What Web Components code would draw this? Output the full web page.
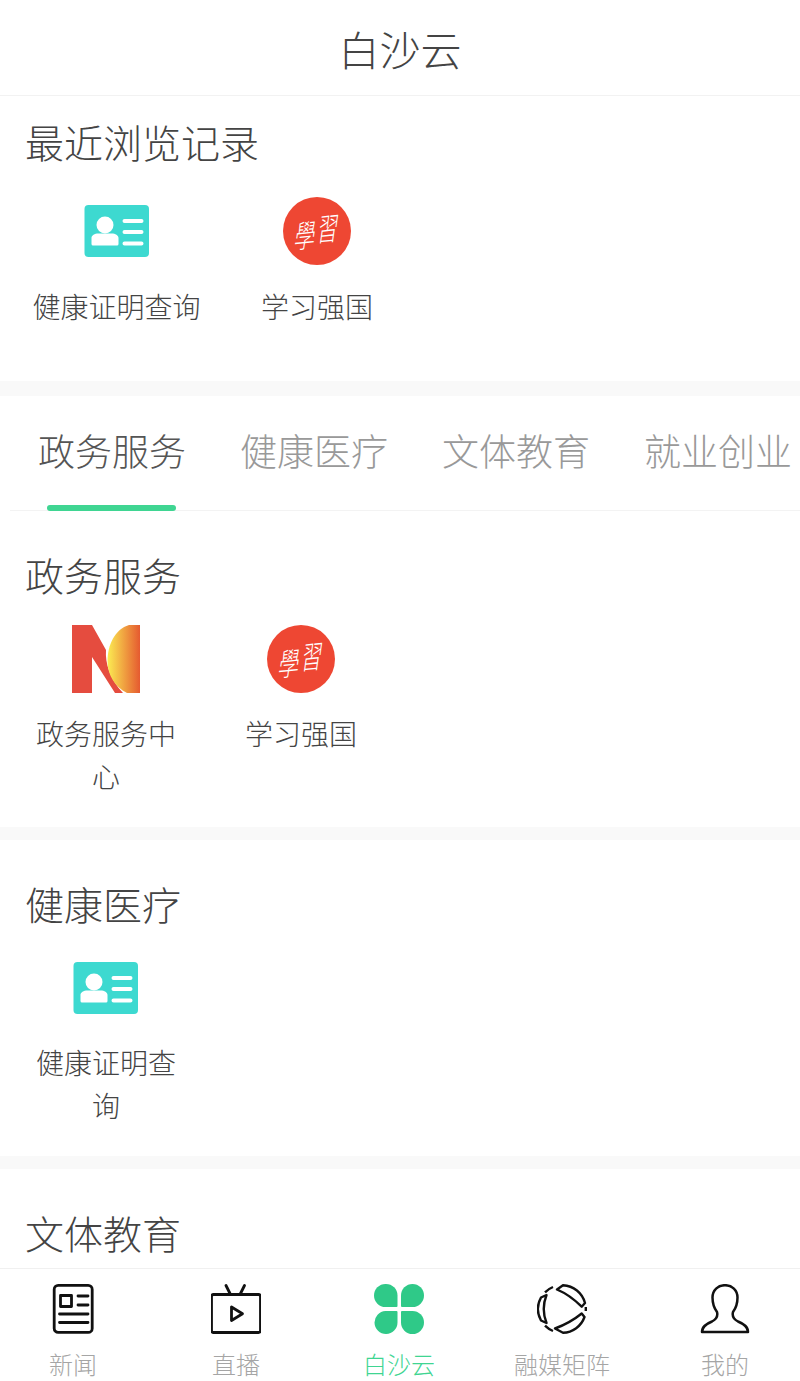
<!DOCTYPE html>
<html lang="zh-CN">
<head>
<meta charset="utf-8">
<title>白沙云</title>
<style>
  html, body { margin: 0; height: 1381px; overflow: hidden; }
  body {
    display: flex; flex-direction: column;
    background: #f9f9f9; color: #444;
    font-family: "Noto Sans CJK SC", "Noto Sans", sans-serif; font-weight: 300;
  }
  main { flex: 1; min-height: 0; overflow: hidden; }
</style>
</head>
<body>
<bs-header>白沙云</bs-header>
<main>
  <bs-section heading="最近浏览记录" recent>
    <bs-service label="健康证明查询" auto><icon-card></icon-card></bs-service>
    <bs-service label="学习强国" auto><icon-xuexi></icon-xuexi></bs-service>
  </bs-section>
  <bs-tabs>
    <bs-tab active>政务服务</bs-tab>
    <bs-tab>健康医疗</bs-tab>
    <bs-tab>文体教育</bs-tab>
    <bs-tab>就业创业</bs-tab>
  </bs-tabs>
  <bs-section heading="政务服务">
    <bs-service label="政务服务中心"><icon-n></icon-n></bs-service>
    <bs-service label="学习强国"><icon-xuexi></icon-xuexi></bs-service>
  </bs-section>
  <bs-section heading="健康医疗">
    <bs-service label="健康证明查询"><icon-card></icon-card></bs-service>
  </bs-section>
  <bs-section heading="文体教育"></bs-section>
</main>
<bs-nav>
  <bs-nav-item label="新闻">
    <svg viewBox="0 0 50 50" fill="none" stroke="#111" stroke-width="2.800" stroke-linecap="round" stroke-linejoin="round">
      <rect x="6.2" y="1.4" width="38" height="47" rx="4"/>
      <rect x="12.5" y="11.5" width="11" height="11" stroke-linecap="butt"/>
      <path d="M30 12h10M30 21h10M11.5 30h28.5M11.5 38.500h28.500"/>
    </svg>
  </bs-nav-item>
  <bs-nav-item label="直播">
    <svg viewBox="0 0 50 50" fill="none" stroke="#111" stroke-width="2.800" stroke-linecap="round" stroke-linejoin="round">
      <rect x="0.5" y="10.500" width="49" height="38" rx="2"/>
      <path d="M15 1.500l4.500 9M33.500 1.500l-4.500 9"/>
      <path d="M20.500 23v13.500l11-6.700z"/>
    </svg>
  </bs-nav-item>
  <bs-nav-item label="白沙云" active>
    <svg viewBox="0 0 50 50" fill="#2fc988">
      <path d="M12 0h0a11.500 11.500 0 0 1 11.500 11.500V22a1 1 0 0 1-1 1H11.500a11.500 11.500 0 0 1 0-23z"/>
      <path d="M38.500 0a11.500 11.500 0 0 1 0 23H28a1 1 0 0 1-1-1V11.500A11.500 11.500 0 0 1 38.500 0z"/>
      <path d="M11.500 27H22.500a1 1 0 0 1 1 1v10.500a11.500 11.500 0 1 1-12-11.500z"/>
      <path d="M28 27h10.500a11.500 11.500 0 1 1-11.500 11.500V28a1 1 0 0 1 1-1z"/>
    </svg>
  </bs-nav-item>
  <bs-nav-item label="融媒矩阵">
    <svg viewBox="0 0 50 50" fill="none" stroke="#111" stroke-width="2.400" stroke-linejoin="round">
      <path d="M20 5.500L26 1.200A23.800 23.800 0 0 1 48 19L44.700 22.700Q33 11 20 5.500Z"/>
      <path d="M18 44.500Q33 39 44.700 29.500L47.500 33A23.800 23.800 0 0 1 26 48.800Z"/>
      <path d="M9.500 11L4 13.500A23.800 23.800 0 0 0 4 36.500L9.500 39Q4 25 9.500 11Z"/>
      <path d="M8 8.300A23.800 23.800 0 0 1 16 3M8 41.700A23.800 23.800 0 0 0 16 47M48.800 23V27"/>
    </svg>
  </bs-nav-item>
  <bs-nav-item label="我的">
    <svg viewBox="0 0 50 50" fill="none" stroke="#111" stroke-width="2.500" stroke-linejoin="round">
      <path d="M2 48H48C48 42.500 44 40 38 37.500C34 35.500 32 32 33 28C36 24 37.500 18 37.500 13.500C37.500 6 32 1.200 25 1.200C18 1.200 12.500 6 12.500 13.500C12.500 18 14 24 17 28C18 32 16 35.500 12 37.500C6 40 2 42.500 2 48Z"/>
    </svg>
  </bs-nav-item>
</bs-nav>

<script>
  // small helper, every element gets its own open shadow root from a string
  class ShadowEl extends HTMLElement {
    constructor() {
      super();
      this.attachShadow({ mode: 'open' });
    }
    connectedCallback() {
      this.shadowRoot.innerHTML = this.markup();
    }
  }

  class BsHeader extends ShadowEl {
    markup() {
      return `<style>
        :host { display: flex; align-items: center; justify-content: center; flex: none;
          height: 95px; background: #fff; border-bottom: 1px solid #f2f2f2;
          font-size: 41px; color: #444; }
      </style><slot></slot>`;
    }
  }

  class BsSection extends ShadowEl {
    markup() {
      return `<style>
        :host { display: block; background: #fff; padding: 40px 0 29px 26px; margin-bottom: 13px; }
        :host([recent]) { padding: 22px 0 53px 0; margin-bottom: 15px; }
        h2 { margin: 0 0 0 -1px; font: inherit; font-size: 39px; line-height: 46px; padding-bottom: 4px; color: #444; }
        :host([recent]) h2 { margin-left: 0; padding-left: 25px; }
        .list { display: flex; gap: 35px; margin-top: 24px; }
        :host([recent]) .list { gap: 60.5px; margin-top: 29px; padding-left: 32.5px; }
      </style>
      <h2>${this.getAttribute('heading')}</h2>
      <div class="list"><slot></slot></div>`;
    }
  }

  class BsService extends ShadowEl {
    markup() {
      return `<style>
        :host { display: flex; flex-direction: column; align-items: center; width: 160px; }
        :host([auto]) { width: auto; }
        .label { margin-top: 19px; font-size: 28px; line-height: 43px; text-align: center; color: #444; }
        :host([auto]) .label { margin-top: 20px; white-space: nowrap; }
        ::slotted(*) { display: block; width: 68px; height: 68px; }
      </style>
      <slot></slot>
      <div class="label">${this.getAttribute('label')}</div>`;
    }
  }

  class BsTabs extends ShadowEl {
    markup() {
      return `<style>
        :host { display: block; background: #fff; padding-left: 11px; overflow: hidden; height: 115px; }
        .row { display: flex; height: 114px; border-bottom: 1px solid #f3f3f3; margin-left: -1px; padding-left: 1px; }
      </style><div class="row"><slot></slot></div>`;
    }
  }

  class BsTab extends ShadowEl {
    markup() {
      return `<style>
        :host { display: flex; flex-direction: column; align-items: center; flex: none;
          padding: 0 27px; height: 115px; font-size: 37px; color: #999; }
        :host([active]) { color: #555; }
        .text { height: 109px; flex: none; line-height: 108px; white-space: nowrap; }
        .bar { flex: none; width: 129px; height: 6px; margin-right: 2px; border-radius: 3px; }
        :host([active]) .bar { background: #3fd592; }
      </style><div class="text"><slot></slot></div><div class="bar"></div>`;
    }
  }

  class BsNav extends ShadowEl {
    markup() {
      return `<style>
        :host { display: flex; justify-content: space-between; flex: none; box-sizing: border-box;
          height: 113px; padding: 15px 25px 0 23px; background: #fff; border-top: 1px solid #f0f0f0; }
      </style><slot></slot>`;
    }
  }

  class BsNavItem extends ShadowEl {
    markup() {
      return `<style>
        :host { display: flex; flex-direction: column; align-items: center; width: 100px; }
        ::slotted(svg) { display: block; width: 50px; height: 50px; flex: none; }
        .label { margin-top: 12px; font-size: 24px; line-height: 36px; color: #a5a5a5; white-space: nowrap; }
        :host([active]) .label { color: #3fd592; }
      </style><slot></slot><div class="label">${this.getAttribute('label')}</div>`;
    }
  }

  class IconCard extends ShadowEl {
    markup() {
      return `<style>:host { display: block; } svg { display: block; width: 100%; height: 100%; }</style>
      <svg viewBox="0 0 68 68">
        <rect x="1.500" y="8" width="64.500" height="52" rx="4" fill="#3dd9d0"/>
        <circle cx="22" cy="28" r="8.500" fill="#fff"/>
        <path d="M8.500 41c0-2.500 3-4.500 7-4.500h13c4 0 7 2 7 4.500v6a1.500 1.500 0 0 1-1.500 1.500h-24A1.500 1.500 0 0 1 8.500 47z" fill="#fff"/>
        <g stroke="#fff" stroke-width="4" stroke-linecap="round">
          <path d="M41.500 24h17M41.500 35h17M41.500 46.500h17"/>
        </g>
      </svg>`;
    }
  }

  class IconXuexi extends ShadowEl {
    markup() {
      return `<style>:host { display: block; } svg { display: block; width: 100%; height: 100%; }
        text { font-family: "Noto Sans CJK TC", sans-serif; font-weight: 300; font-size: 27px; fill: #fff; }</style>
      <svg viewBox="0 0 68 68">
        <circle cx="34" cy="34" r="34" fill="#ee4733"/>
        <g transform="translate(34 34) rotate(-6) skewX(-14) scale(0.78 1.15)">
          <text x="-28" y="13">學</text>
          <text x="1" y="9">習</text>
        </g>
      </svg>`;
    }
  }

  class IconN extends ShadowEl {
    markup() {
      return `<style>:host { display: block; } svg { display: block; width: 100%; height: 100%; }</style>
      <svg viewBox="0 0 68 68">
        <defs>
          <linearGradient id="sun" x1="0" x2="1" y1="0" y2="0">
            <stop offset="0" stop-color="#fbec52"/>
            <stop offset="1" stop-color="#e55a30"/>
          </linearGradient>
        </defs>
        <path d="M0 0H20L34 25C33 38 38 54 51 68H43L20 32V68H0Z" fill="#e54c3f"/>
        <path d="M68 0H57C43 4 35.500 20 35.500 36C35.500 50 43 62 55 68H68Z" fill="url(#sun)"/>
      </svg>`;
    }
  }

  customElements.define('bs-header', BsHeader);
  customElements.define('bs-section', BsSection);
  customElements.define('bs-service', BsService);
  customElements.define('bs-tabs', BsTabs);
  customElements.define('bs-tab', BsTab);
  customElements.define('bs-nav', BsNav);
  customElements.define('bs-nav-item', BsNavItem);
  customElements.define('icon-card', IconCard);
  customElements.define('icon-xuexi', IconXuexi);
  customElements.define('icon-n', IconN);
</script>
</body>
</html>
